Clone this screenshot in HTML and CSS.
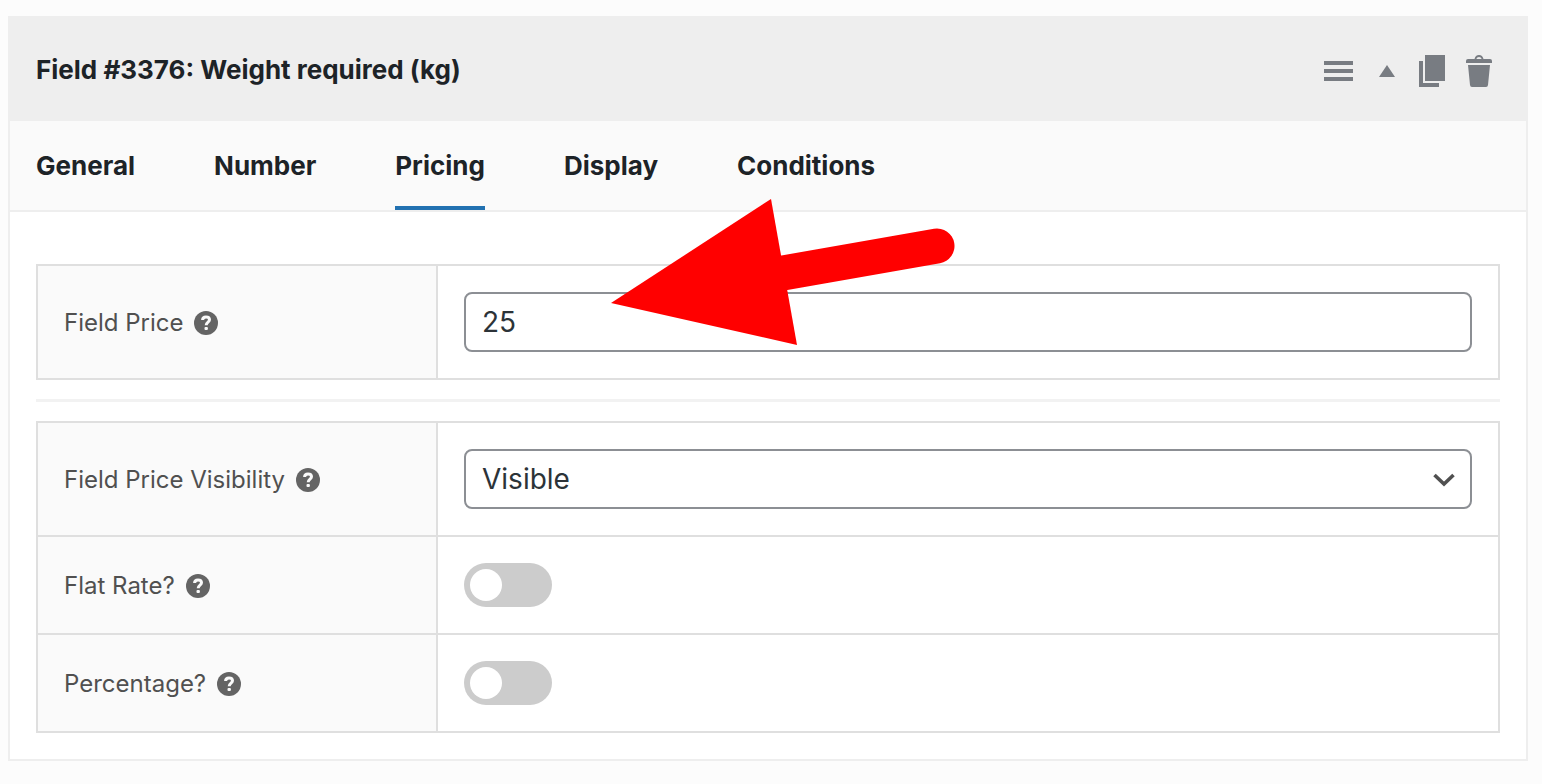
FILE: index.html
```html
<!DOCTYPE html>
<html lang="en">
<head>
<meta charset="utf-8">
<title>Field #3376: Weight required (kg)</title>
<link rel="stylesheet" href="styles.css">
</head>
<body>
<svg class="sprite" aria-hidden="true">
  <symbol id="help" viewBox="0 0 24 24">
    <circle cx="12" cy="12" r="12" fill="#646464"/>
    <path d="M8.600 9C8.600 6.900 10 5.900 12 5.900C14.200 5.900 15.500 7 15.500 8.700C15.500 11.200 12.200 11 12.200 14.300" fill="none" stroke="#fafafa" stroke-width="3"/>
    <rect x="10.500" y="15.900" width="3.400" height="3.200" rx="1" fill="#fafafa"/>
  </symbol>
</svg>
<main class="panel">
  <header class="panel-header">
    <h1 class="panel-title">Field #3376: Weight required (kg)</h1>
    <div class="actions">
      <button class="action" type="button" aria-label="Move">
        <svg width="30" height="32" viewBox="0 0 30 32"><path d="M1 6h29v4H1zM1 14h29v4H1zM1 22h29v4H1z"/></svg>
      </button>
      <button class="action action-toggle" type="button" aria-label="Collapse">
        <svg width="16" height="32" viewBox="0 0 16 32"><path d="M8 10L16 22H0z"/></svg>
      </button>
      <button class="action action-copy" type="button" aria-label="Duplicate">
        <svg width="26" height="32" viewBox="0 0 26 32"><path d="M6 0h20v26H6zM0 6h4v22h16v4H0z"/></svg>
      </button>
      <button class="action action-delete" type="button" aria-label="Delete">
        <svg width="26" height="32" viewBox="0 0 26 32"><path fill-rule="evenodd" d="M8.500 4C9.200 1.500 10.500 0 13 0S16.800 1.500 17.500 4H24q2 0 2 2v2H0V6q0-2 2-2zM10.300 4h5.400Q15 2 13 2T10.300 4zM2 10h22l-2 20q-.2 2-2 2H6q-1.800 0-2-2z"/></svg>
      </button>
    </div>
  </header>
  <nav class="tabs">
    <a class="tab" href="#general">General</a>
    <a class="tab" href="#number">Number</a>
    <a class="tab tab-active" href="#pricing" aria-current="page">Pricing</a>
    <a class="tab" href="#display">Display</a>
    <a class="tab" href="#conditions">Conditions</a>
  </nav>
  <form class="settings">
    <div class="group">
      <div class="row">
        <div class="row-label"><label for="price">Field Price</label><svg class="help"><use href="#help"/></svg></div>
        <div class="row-control"><input class="control" id="price" type="text" value="25"></div>
      </div>
    </div>
    <hr class="divider">
    <div class="group">
      <div class="row">
        <div class="row-label"><label for="visibility">Field Price Visibility</label><svg class="help"><use href="#help"/></svg></div>
        <div class="row-control select-wrap">
          <select class="control" id="visibility"><option>Visible</option><option>Hidden</option></select>
          <svg class="chevron" viewBox="0 0 22 14"><path d="M1.500 2L11 11L20.500 2" fill="none" stroke="#505050" stroke-width="3.600"/></svg>
        </div>
      </div>
      <div class="row">
        <div class="row-label"><label for="flat">Flat Rate?</label><svg class="help"><use href="#help"/></svg></div>
        <div class="row-control"><input class="switch" id="flat" type="checkbox"></div>
      </div>
      <div class="row">
        <div class="row-label"><label for="percentage">Percentage?</label><svg class="help"><use href="#help"/></svg></div>
        <div class="row-control"><input class="switch" id="percentage" type="checkbox"></div>
      </div>
    </div>
  </form>
  <svg class="arrow" viewBox="0 0 346 148" aria-hidden="true">
    <path d="M172 74L326 47" stroke="#f00" stroke-width="35" stroke-linecap="round"/>
    <path d="M0 104L160 0L186 146z" fill="#f00"/>
  </svg>
</main>
</body>
</html>
```

FILE: styles.css
```css
* {
  box-sizing: border-box;
}

body {
  margin: 0;
  padding: 16px 14px 22px 8px;
  background: #fcfcfc;
  color: #1d2327;
  font-family: Inter, "Liberation Sans", sans-serif;
}

.sprite {
  position: absolute;
  width: 0;
  height: 0;
}

.panel {
  position: relative;
  background: #fff;
  border: 2px solid #eee;
  border-top: 0;
}

.panel-header {
  display: flex;
  align-items: center;
  justify-content: space-between;
  min-height: 105px;
  padding: 2px 34px 0 26px;
  background: #eee;
}

.panel-title {
  margin: 0;
  font-size: 26px;
  font-weight: 700;
  line-height: 32px;
}

.actions {
  display: flex;
  align-items: center;
  padding-top: 3px;
}

.action {
  display: flex;
  padding: 0;
  border: 0;
  background: none;
  fill: #787c82;
}

.action-toggle {
  margin-left: 26px;
}

.action-copy {
  margin-left: 24px;
}

.action-delete {
  margin-left: 21px;
}

.tabs {
  display: flex;
  gap: 79px;
  padding: 0 26px;
  background: #fafafa;
  border-bottom: 2px solid #eee;
}

.tab {
  padding: 29px 0 24px;
  border-bottom: 4px solid transparent;
  color: #1d2327;
  font-size: 26px;
  font-weight: 700;
  line-height: 32px;
  text-decoration: none;
}

.tab-active {
  border-color: #2271b1;
}

.settings {
  padding: 52px 26px 26px;
}

.group {
  border: 2px solid #dfdfdf;
}

.row {
  display: grid;
  grid-template-columns: 400px 1fr;
}

.row + .row {
  border-top: 2px solid #dfdfdf;
}

.row-label {
  display: flex;
  align-items: center;
  gap: 11px;
  padding: 2px 26px 0;
  background: #fafafa;
  border-right: 2px solid #dfdfdf;
  color: #505050;
  font-size: 24px;
  line-height: 32px;
}

.help {
  width: 24px;
  height: 24px;
}

.row-control {
  display: flex;
  padding: 26px;
}

.control {
  width: 100%;
  height: 60px;
  padding: 0 16px;
  appearance: none;
  background: #fff;
  border: 2px solid #8c8f94;
  border-radius: 8px;
  color: #2c3338;
  font: 28px/32px Inter, "Liberation Sans", sans-serif;
}

.select-wrap {
  position: relative;
}

.chevron {
  position: absolute;
  top: 50%;
  right: 43px;
  width: 22px;
  height: 14px;
  margin-top: -6px;
  pointer-events: none;
}

.switch {
  width: 88px;
  height: 44px;
  margin: 0;
  padding: 6px;
  appearance: none;
  background: #ccc;
  border-radius: 22px;
}

.switch::before {
  content: "";
  display: block;
  width: 32px;
  height: 32px;
  background: #fff;
  border-radius: 50%;
}

.switch:checked {
  background: #2271b1;
}

.switch:checked::before {
  margin-left: 44px;
}

.divider {
  height: 3px;
  margin: 19px 0;
  border: 0;
  background: #f2f2f2;
}

.arrow {
  position: absolute;
  top: 183px;
  left: 601px;
  width: 346px;
  height: 148px;
  pointer-events: none;
}
```
